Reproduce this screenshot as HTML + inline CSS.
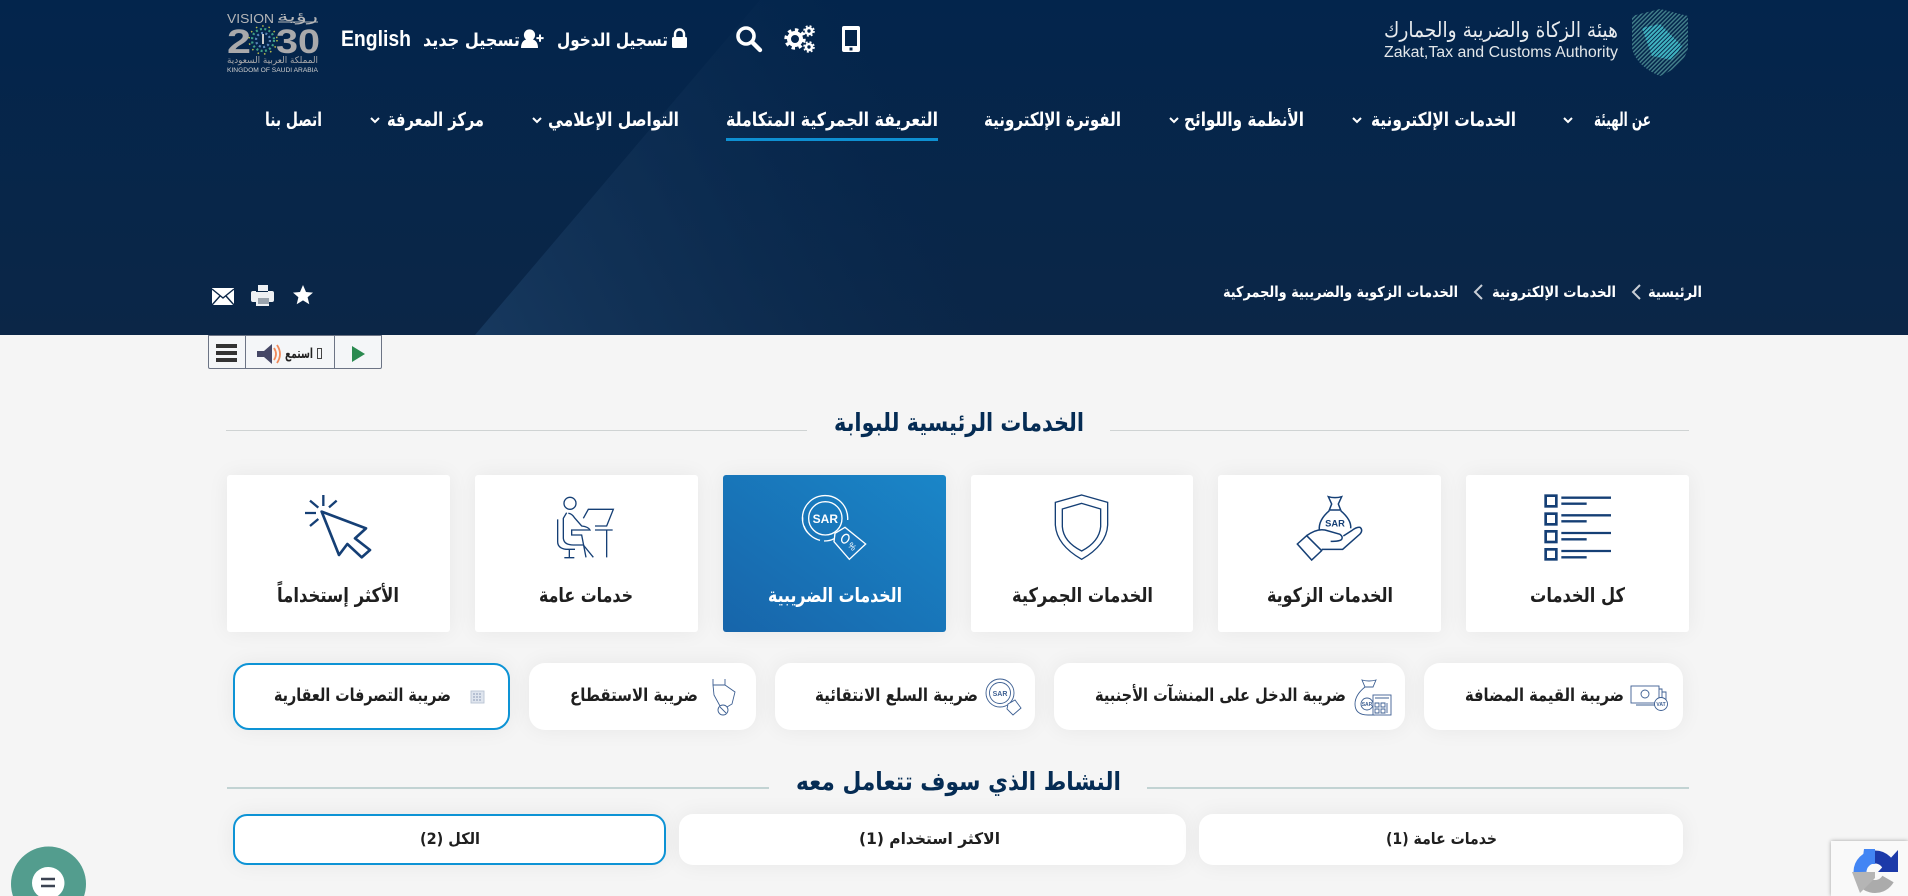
<!DOCTYPE html>
<html lang="ar" dir="ltr"><head><meta charset="utf-8"><title>الخدمات الزكوية والضريبية والجمركية</title>
<style>
html,body{margin:0;padding:0;width:1908px;height:896px;overflow:hidden;background:#f5f5f5;font-family:"DejaVu Sans",sans-serif}
.t{position:absolute;height:30px;line-height:30px;display:flex;justify-content:center;white-space:nowrap;direction:rtl;font-weight:bold;color:#1f1f1f;transform-origin:center}
.w{color:#fff}
.b{position:absolute;background:#fff;box-shadow:0 0 22px rgba(0,0,0,.06)}
.c{top:475px;height:157px;border-radius:3px}
.p{top:663px;height:67px;border-radius:16px}
.q{top:814px;height:51px;border-radius:14px}
.a{border:2px solid #0d93d5;box-sizing:border-box}
svg{position:absolute;left:0;top:0;overflow:visible}
</style></head><body>
<svg width="1908" height="335" viewBox="0 0 1908 335" style="overflow:hidden">
<defs>
<linearGradient id="hb" x1="0" y1="0" x2="0" y2="1"><stop offset="0" stop-color="#03254c"/><stop offset="1" stop-color="#0b2647"/></linearGradient>
<linearGradient id="hl" gradientUnits="userSpaceOnUse" x1="480" y1="335" x2="900" y2="120"><stop offset="0" stop-color="#17395f" stop-opacity=".95"/><stop offset=".45" stop-color="#123358" stop-opacity=".6"/><stop offset="1" stop-color="#0b2d53" stop-opacity="0"/></linearGradient>
</defs>
<rect width="1908" height="335" fill="url(#hb)"/>
<polygon points="475,335 760,0 1300,0 1300,335" fill="url(#hl)"/>
</svg>
<!-- logo right -->
<svg width="1908" height="896">
<defs>
<clipPath id="sh"><path d="M1660,9 L1688,16 V48 Q1684,66 1660,76 Q1636,66 1632,48 V16 Z"/></clipPath>
<pattern id="st" width="3" height="3" patternUnits="userSpaceOnUse" patternTransform="rotate(-45 0 0)"><rect width="3" height="1.4" fill="#6fbfb6"/></pattern>
<pattern id="st2" width="3" height="3" patternUnits="userSpaceOnUse" patternTransform="rotate(-45 0 0)"><rect width="3" height="2" fill="#3fb3c0"/></pattern>
</defs>
<g clip-path="url(#sh)"><rect x="1630" y="8" width="60" height="70" fill="url(#st)" opacity=".6"/><path d="M1642,28 L1660,24 L1682,46 L1672,60 L1652,56 Z" fill="url(#st2)"/></g>
<!-- top icons -->
<g fill="#fff">
<path d="M675,38 V34 a4.5,4.5 0 0 1 9,0 V38" fill="none" stroke="#fff" stroke-width="2.4"/>
<rect x="672" y="37" width="15" height="11" rx="1.5"/>
<circle cx="529.5" cy="35" r="5.6"/><path d="M521,48 q0,-9 8.5,-9 q8.5,0 8.5,9 z"/><path d="M539,34.5 h2 v2.6 h2.6 v2 h-2.6 v2.6 h-2 v-2.6 h-2.6 v-2 h2.6 z"/>
<path d="M844,26 h14 a2,2 0 0 1 2,2 v22 a2,2 0 0 1 -2,2 h-14 a2,2 0 0 1 -2,-2 v-22 a2,2 0 0 1 2,-2 z M845,30 v16 h12 v-16 z M849.5,47.5 h3 v3 h-3 z" fill-rule="evenodd"/>
</g>
<circle cx="746" cy="36" r="8" fill="none" stroke="#fff" stroke-width="3.6"/><path d="M752,42 L760,50" stroke="#fff" stroke-width="4.4" stroke-linecap="round"/>
<circle cx="795" cy="39" r="6" fill="none" stroke="#fff" stroke-width="4"/><circle cx="795" cy="39" r="9" fill="none" stroke="#fff" stroke-width="3.4" stroke-dasharray="3.4 3.6"/>
<circle cx="809" cy="31" r="3" fill="none" stroke="#fff" stroke-width="2.6"/><circle cx="809" cy="47" r="3" fill="none" stroke="#fff" stroke-width="2.6"/>
<circle cx="809" cy="31" r="5" fill="none" stroke="#fff" stroke-width="1.6" stroke-dasharray="2 2"/><circle cx="809" cy="47" r="5" fill="none" stroke="#fff" stroke-width="1.6" stroke-dasharray="2 2"/>
<!-- nav chevrons -->
<g fill="none" stroke="#fff" stroke-width="2">
<path d="M1564,118 l4,4 l4,-4"/><path d="M1353,118 l4,4 l4,-4"/><path d="M1170,118 l4,4 l4,-4"/><path d="M533,118 l4,4 l4,-4"/><path d="M371,118 l4,4 l4,-4"/>
<path d="M1640,285 l-7,7 l7,7" stroke="#c9ced6"/><path d="M1482,285 l-7,7 l7,7" stroke="#c9ced6"/>
</g>
<rect x="726" y="138" width="212" height="3" fill="#0e90d2"/>
<!-- vision -->
<text x="227" y="23" font-family="Liberation Sans" font-size="12.5" fill="#b5b6b8" textLength="47" lengthAdjust="spacingAndGlyphs">VISION</text>
<path d="M278,22 h40" stroke="#b5b6b8" stroke-width="1"/>
<text x="227" y="53" font-family="Liberation Sans" font-size="34" font-weight="bold" fill="#a9a9ab" textLength="24" lengthAdjust="spacingAndGlyphs">2</text>
<text x="276" y="53" font-family="Liberation Sans" font-size="34" font-weight="bold" fill="#a9a9ab" textLength="44" lengthAdjust="spacingAndGlyphs">30</text>
<g fill="none" stroke-width="2.2" stroke-dasharray="2 2.4"><circle cx="263" cy="40" r="11" stroke="#3f9f86"/><circle cx="263" cy="40" r="7" stroke="#5b86b8"/><circle cx="263" cy="40" r="14" stroke="#b9bd4b" stroke-width="1.5" stroke-dasharray="1.5 5"/></g>
<path d="M263,34 v10" stroke="#c9c9c9" stroke-width="2"/>
<text x="227" y="72" font-family="Liberation Sans" font-size="6" fill="#cfcfcf" textLength="91" lengthAdjust="spacingAndGlyphs">KINGDOM OF SAUDI ARABIA</text>
<!-- share icons -->
<path d="M212,288 h22 v17 h-22 z" fill="#fff"/><path d="M212,289 l11,9 l11,-9 M212,305 l8,-9 M234,305 l-8,-9" fill="none" stroke="#0b2647" stroke-width="1.4"/>
<path d="M258,285 h10 v6 h4 a2,2 0 0 1 2,2 v7 a2,2 0 0 1 -2,2 h-3 v4 h-13 v-4 h-3 a2,2 0 0 1 -2,-2 v-7 a2,2 0 0 1 2,-2 h5 z" fill="#eef0f3"/><path d="M258,298 h11 v6 h-11 z" fill="#9aa3ad"/><path d="M256,291.5 h12" stroke="#0b2647" stroke-width="1"/>
<path d="M303,285 l3,7 l7,.6 l-5.4,4.6 l1.7,7 l-6.3,-3.8 l-6.3,3.8 l1.7,-7 l-5.4,-4.6 l7,-.6 z" fill="#fff"/>
</svg>
<div class="t" style="left:277px;top:2px;width:41px;font-size:14px;font-weight:normal;color:#b5b6b8">رؤية</div>
<div class="t" style="left:227px;top:46px;width:91px;font-size:9px;font-weight:normal;color:#a9a9ab">المملكة العربية السعودية</div>
<div class="t w" style="left:1384px;top:15px;width:234px;font-size:21px;font-weight:normal;color:#e8ebee">هيئة الزكاة والضريبة والجمارك</div>
<div class="t w" style="left:1384px;top:38px;width:234px;font-size:15.5px;font-family:'Liberation Sans';font-weight:normal;direction:ltr;color:#e3e7ea">Zakat,Tax and Customs Authority</div>
<div class="t w" style="left:341px;top:24px;width:70px;font-size:22px;font-family:'Liberation Sans';direction:ltr">English</div>
<div class="t w" style="left:423px;top:26px;width:97px;font-size:18px">تسجيل جديد</div>
<div class="t w" style="left:557px;top:26px;width:111px;font-size:18px">تسجيل الدخول</div>
<div class="t w" style="left:1594px;top:105px;width:57px;font-size:19px">عن الهيئة</div>
<div class="t w" style="left:1371px;top:105px;width:145px;font-size:19px">الخدمات الإلكترونية</div>
<div class="t w" style="left:1184px;top:105px;width:120px;font-size:19px">الأنظمة واللوائح</div>
<div class="t w" style="left:984px;top:105px;width:137px;font-size:19px">الفوترة الإلكترونية</div>
<div class="t w" style="left:726px;top:105px;width:212px;font-size:19px">التعريفة الجمركية المتكاملة</div>
<div class="t w" style="left:548px;top:105px;width:131px;font-size:19px">التواصل الإعلامي</div>
<div class="t w" style="left:387px;top:105px;width:97px;font-size:19px">مركز المعرفة</div>
<div class="t w" style="left:265px;top:105px;width:57px;font-size:19px">اتصل بنا</div>
<div class="t w" style="left:1648px;top:277px;width:54px;font-size:15px">الرئيسية</div>
<div class="t w" style="left:1492px;top:277px;width:124px;font-size:15px">الخدمات الإلكترونية</div>
<div class="t w" style="left:1223px;top:277px;width:235px;font-size:15px">الخدمات الزكوية والضريبية والجمركية</div>
<!-- toolbar -->
<div style="position:absolute;left:208px;top:335px;width:174px;height:34px;box-sizing:border-box;border:1px solid #6c7485;border-radius:0 0 2px 2px;background:#f4f6f8"></div>
<div style="position:absolute;left:245px;top:335px;width:1px;height:34px;background:#6c7485"></div>
<div style="position:absolute;left:334px;top:335px;width:1px;height:34px;background:#6c7485"></div>
<div class="t" style="left:285px;top:339px;width:28px;font-size:14px;color:#222">استمع</div>
<svg width="1908" height="896">
<path d="M216,346 h21 M216,353 h21 M216,360 h21" stroke="#333" stroke-width="4" fill="none"/>
<path d="M257,351 h7 l8,-7 v20 l-8,-7 h-7 z" fill="#454766"/>
<path d="M274,348 q4,6 0,12 M277,345 q6,9 0,18" stroke="#f08a5a" stroke-width="1.8" fill="none"/>
<rect x="317.5" y="348.5" width="4" height="10" fill="none" stroke="#444" stroke-width="1"/>
<path d="M352,346 l13,8 l-13,8 z" fill="#2a8a50"/>
<!-- heading lines -->
<path d="M226,430.5 H807 M1110,430.5 H1689" stroke="#cfd3d3" stroke-width="1"/>
<path d="M227,788 H769 M1147,788 H1689" stroke="#c2d3d3" stroke-width="2"/>
</svg>
<div class="t" style="left:834px;top:408px;width:250px;font-size:25px;color:#052c54">الخدمات الرئيسية للبوابة</div>
<div class="t" style="left:796px;top:767px;width:325px;font-size:25px;color:#052c54">النشاط الذي سوف تتعامل معه</div>
<!-- cards -->
<div class="b c" style="left:227px;width:223px"></div>
<div class="b c" style="left:475px;width:223px"></div>
<div class="b c" style="left:723px;width:223px;background:linear-gradient(to bottom left,#1a86c8,#1765aa)"></div>
<div class="b c" style="left:971px;width:222px"></div>
<div class="b c" style="left:1218px;width:223px"></div>
<div class="b c" style="left:1466px;width:223px"></div>
<div class="t" style="left:277px;top:580px;width:122px;font-size:20px">الأكثر إستخداماً</div>
<div class="t" style="left:539px;top:580px;width:94px;font-size:20px">خدمات عامة</div>
<div class="t w" style="left:768px;top:580px;width:134px;font-size:20px">الخدمات الضريبية</div>
<div class="t" style="left:1012px;top:580px;width:141px;font-size:20px">الخدمات الجمركية</div>
<div class="t" style="left:1267px;top:580px;width:126px;font-size:20px">الخدمات الزكوية</div>
<div class="t" style="left:1530px;top:580px;width:95px;font-size:20px">كل الخدمات</div>
<!-- pills -->
<div class="b p a" style="left:233px;width:277px"></div>
<div class="b p" style="left:529px;width:227px"></div>
<div class="b p" style="left:775px;width:260px"></div>
<div class="b p" style="left:1054px;width:351px"></div>
<div class="b p" style="left:1424px;width:259px"></div>
<div class="t" style="left:274px;top:681px;width:177px;font-size:18px">ضريبة التصرفات العقارية</div>
<div class="t" style="left:570px;top:681px;width:128px;font-size:18px">ضريبة الاستقطاع</div>
<div class="t" style="left:815px;top:681px;width:163px;font-size:18px">ضريبة السلع الانتقائية</div>
<div class="t" style="left:1095px;top:681px;width:251px;font-size:18px">ضريبة الدخل على المنشآت الأجنبية</div>
<div class="t" style="left:1465px;top:681px;width:159px;font-size:18px">ضريبة القيمة المضافة</div>
<!-- tabs -->
<div class="b q a" style="left:233px;width:433px"></div>
<div class="b q" style="left:679px;width:507px"></div>
<div class="b q" style="left:1199px;width:484px"></div>
<div class="t" style="left:420px;top:824px;width:60px;font-size:16px">الكل (2)</div>
<div class="t" style="left:859px;top:824px;width:141px;font-size:16px">الاكثر استخدام (1)</div>
<div class="t" style="left:1386px;top:824px;width:111px;font-size:16px">خدمات عامة (1)</div>
<!-- card icons -->
<svg width="1908" height="896">
<g transform="translate(220,470) scale(.33333)" fill="none" stroke="#153f75">
<path d="M305,125 L438,175 L405,205 L450,240 L425,262 L382,222 L357,255 Z" stroke-width="8" stroke-linejoin="round"/>
<path d="M310,75 V108 M350,92 L327,112 M270,92 L295,113 M255,129 H288 M270,168 L295,147" stroke-width="7"/>
<g stroke-width="4">
<circle cx="1050" cy="100" r="18"/>
<path d="M1040,128 L1030,145 V205 Q1032,225 1060,225 H1090 L1120,262"/>
<path d="M1045,130 Q1055,130 1065,145 L1085,168 Q1105,170 1110,180 H1055 V195 H1085 L1098,262"/>
<path d="M1013,148 V215 Q1013,235 1038,238 H1065 M1048,238 V262 M1033,263 H1063"/>
<path d="M1125,180 H1178 M1160,180 V262 M1090,145 L1105,118 H1180 L1160,168 H1125"/>
</g>
</g>
<g transform="translate(720,470) scale(.33333)" fill="none">
<g stroke="#153f75" stroke-width="4"><path d="M1085,75 L1163,97 V165 Q1160,225 1085,268 Q1010,225 1006,165 V97 Z"/><path d="M1085,100 L1142,117 V170 Q1138,215 1085,243 Q1030,215 1027,170 V117 Z"/></g>
<g stroke="#fff" stroke-width="4">
<circle cx="316" cy="145" r="50"/><path d="M262,187 A68,68 0 1 1 383,150"/><path d="M248,152 V142"/><path d="M252,168 A68,68 0 0 0 300,211 M312,213 Q330,213 342,206"/>
<path d="M345,190 L375,172 L437,222 L388,268 L342,215 Z" fill="#1a76bc"/>
<ellipse cx="376" cy="206" rx="10" ry="14" transform="rotate(30 376 206)"/>
</g>
<text x="316" y="159" fill="#fff" font-family="Liberation Sans" font-weight="bold" font-size="36" text-anchor="middle">SAR</text>
<text x="396" y="238" fill="#fff" font-family="Liberation Sans" font-size="26" text-anchor="middle" transform="rotate(45 396 230)">%</text>
</g>
<g transform="translate(1210,470) scale(.33333)" fill="none" stroke="#153f75">
<g stroke-width="4.5">
<path d="M355,80 Q375,86 395,80 L385,102 L392,120 H358 L365,102 Z"/>
<path d="M358,122 Q325,150 328,180 M392,122 Q425,150 422,175"/>
<path d="M262,222 L290,197 L335,242 L305,270 Z"/>
<path d="M290,197 Q320,175 345,180 L390,193 Q400,200 395,208 Q390,214 362,214 M335,238 H398 L450,192 Q460,180 450,172 Q440,170 425,182 L400,198"/>
</g>
<text x="375" y="170" fill="#153f75" stroke="none" font-family="Liberation Sans" font-weight="bold" font-size="28" text-anchor="middle">SAR</text>
<g stroke-width="8">
<rect x="1007" y="77" width="32" height="32"/><rect x="1007" y="131" width="32" height="32"/><rect x="1007" y="184" width="32" height="32"/><rect x="1007" y="238" width="32" height="30"/>
</g>
<path d="M1054,83 H1203 M1054,136 H1203 M1054,189 H1203 M1054,243 H1203 M1054,101 H1130 M1054,154 H1130 M1054,208 H1130 M1054,262 H1130" stroke-width="7"/>
</g>
<!-- small pill icons -->
<g fill="none" stroke="#3d5f92" stroke-width=".9">
<rect x="471" y="691" width="13" height="12" fill="#dfe5ee" stroke="#b9c3d3"/><path d="M473,694 h9 M473,697 h9 M473,700 h9" stroke="#8d9cb5" stroke-dasharray="2 1"/>
<path d="M713,679 V685 H725 M725,679 V685 M713,685 L714,695 L720,706 M725,685 L735,692 L732,704 L727,707"/><circle cx="723" cy="710" r="5"/><path d="M720,707 L726,713"/>
<circle cx="1000" cy="693" r="14"/><circle cx="1000" cy="693" r="10.5"/><path d="M1008,704 L1015,700 L1021,708 L1013,715 L1007,709 Z" fill="#fff"/>
<path d="M1362,680 q7,2 14,0 l-3,7 h-8 z M1365,687 Q1355,695 1355,704 Q1355,715 1368,715 H1375"/><circle cx="1367" cy="704" r="6"/><rect x="1373" y="695" width="18" height="20" fill="#fff"/><path d="M1375,698 H1389 M1375,703 h4 v4 h-4 z M1381,703 h4 v4 h-4 z M1375,709 h4 v4 h-4 z M1381,709 h4 v4 h-4 z M1387,703 v10"/>
<rect x="1631" y="686" width="28" height="17"/><circle cx="1645" cy="694" r="4"/><path d="M1659,689 h3 v16 h-26 M1662,692 h4 v14"/><circle cx="1661" cy="704" r="6.5" fill="#fff"/>
</g>
<text x="1000" y="696" font-family="Liberation Sans" font-size="7" font-weight="bold" fill="#3d5f92" text-anchor="middle">SAR</text>
<text x="1367" y="706" font-family="Liberation Sans" font-size="5" font-weight="bold" fill="#3d5f92" text-anchor="middle">SAR</text>
<text x="1661" y="706" font-family="Liberation Sans" font-size="5" font-weight="bold" fill="#3d5f92" text-anchor="middle">VAT</text>
<!-- blob -->
<circle cx="48.5" cy="884" r="37.5" fill="#539d8e"/>
<path d="M48,867 a16,16 0 0 1 6,31 l-6,2 v-1 a16,16 0 0 1 0,-32 z" fill="#fff"/>
<path d="M41,879 h14 M41,886 h14" stroke="#3c4352" stroke-width="2.6"/>
</svg>
<!-- recaptcha -->
<div style="position:absolute;left:1831px;top:841px;width:77px;height:55px;background:#f9f9f9;box-shadow:0 0 4px rgba(0,0,0,.35)"></div>
<svg width="1908" height="896">
<path d="M1860,872 a15,15 0 0 1 15,-15" fill="none" stroke="#4285f4" stroke-width="13"/>
<path d="M1875,857 a15,15 0 0 1 15,15" fill="none" stroke="#1c3aa9" stroke-width="13"/>
<path d="M1898,850 V872 H1878 Z" fill="#1c3aa9"/>
<path d="M1864,849 H1875 V864 H1862 Z" fill="#4285f4"/>
<path d="M1860,872 a15,15 0 0 0 28,7" fill="none" stroke="#ababab" stroke-width="13"/>
<path d="M1852,872 H1875 V878 L1860,893 Z" fill="#b5b5b5"/>
</svg>
<script>
document.querySelectorAll('.t').forEach(function(e){var r=document.createRange();r.selectNodeContents(e);var w=r.getBoundingClientRect().width;if(w>0)e.style.transform='scaleX('+(e.clientWidth/w)+')';});
</script>
</body></html>
